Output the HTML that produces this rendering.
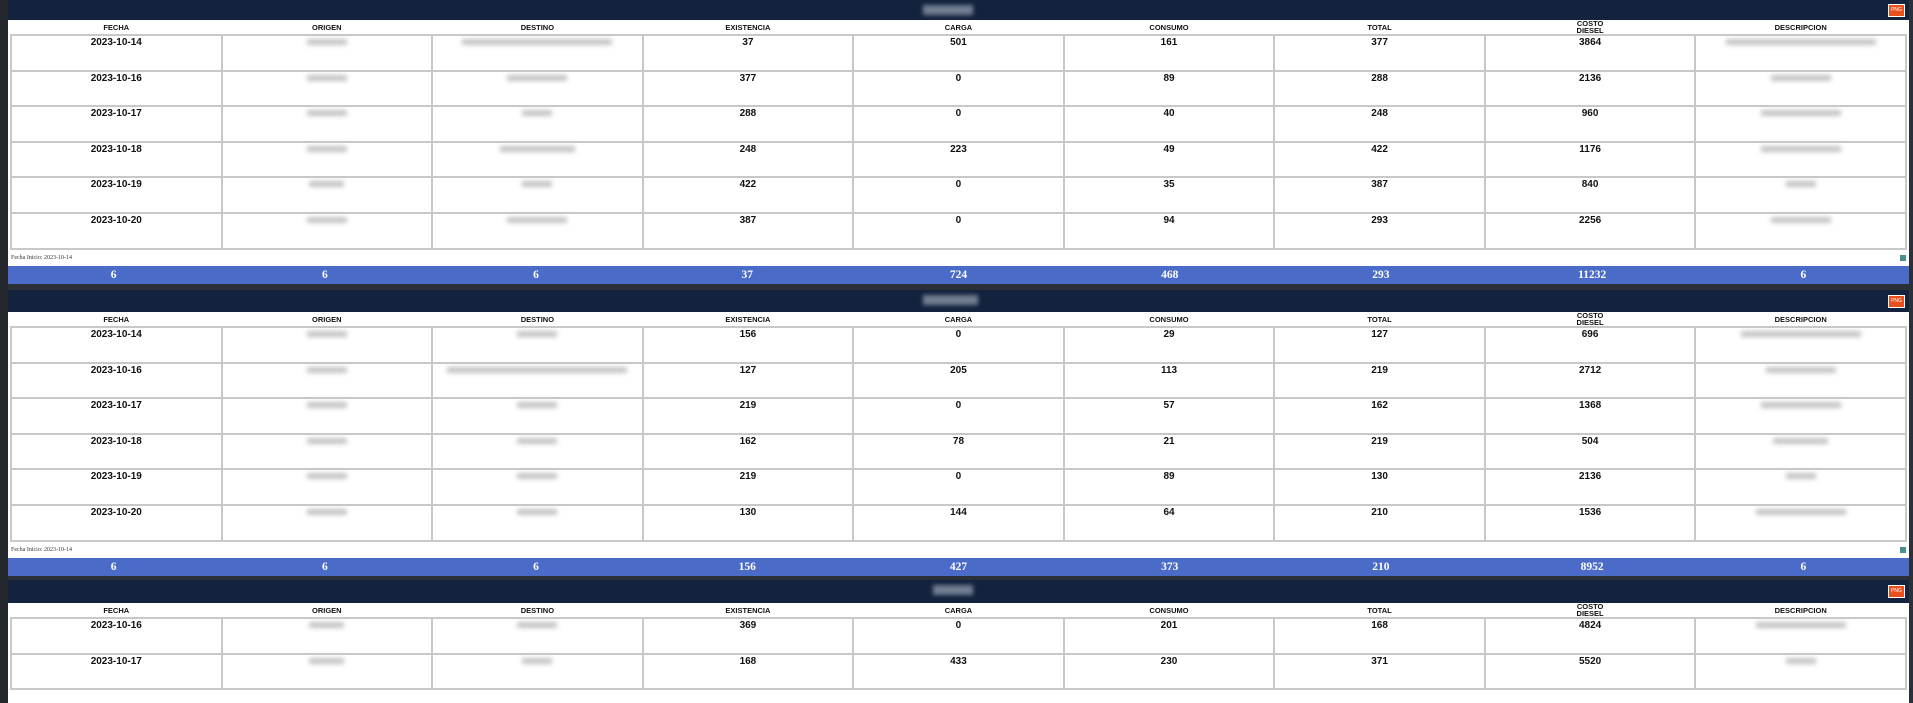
<!DOCTYPE html>
<html><head><meta charset="utf-8"><style>
*{margin:0;padding:0;box-sizing:border-box}
body{width:1913px;height:703px;overflow:hidden;background:#2b3038;font-family:"Liberation Sans",Arial,sans-serif;position:relative}
.strip{position:absolute;left:0;top:0;width:8px;height:703px;background:#24282e}
.panel{position:absolute;left:8px;width:1901px;background:#fff}
.hd{height:20px;background:#13223d;position:relative}
.png{position:absolute;right:4px;top:4px;width:17px;height:13px;background:#e8501e;border:1px solid #fff;color:#fff;font-size:5px;text-align:center;line-height:11px}
.ttl{position:absolute;left:915px;top:5px;width:50px;height:10px;background:#8a94a6;filter:blur(2px);opacity:.8}
table{border-collapse:collapse;table-layout:fixed;width:1897px;margin-left:2px}
th{font-size:7.5px;font-weight:bold;height:13px;line-height:7px;color:#111;padding:0}
td{border:2px solid #c8c8c8;height:35.6px;vertical-align:top;text-align:center;font-size:10px;font-weight:bold;padding-top:1px;color:#111;position:relative}
.bl{display:inline-block;height:6px;background:#c4c4c4;filter:blur(2.5px);margin-top:2px}
.fi{height:16px;font-family:"Liberation Serif",serif;font-size:6px;color:#333;padding:5px 0 0 3px;position:relative}
.plus{position:absolute;right:3px;top:5px;width:6px;height:6px;background:#4a8f8f}
.sum{height:18px;background:#4a6cc8;display:flex}
.sum div{flex:1;text-align:center;color:#fff;font-family:"Liberation Serif",serif;font-weight:bold;font-size:11.5px;line-height:18px}
</style></head><body>
<div class="strip"></div>

<div class="panel" style="top:0">
<div class="hd"><div class="ttl"></div><div class="png">PNG</div></div>
<table><tr><th>FECHA</th><th>ORIGEN</th><th>DESTINO</th><th>EXISTENCIA</th><th>CARGA</th><th>CONSUMO</th><th>TOTAL</th><th>COSTO<br>DIESEL</th><th>DESCRIPCION</th></tr>
<tr><td>2023-10-14</td><td><span class="bl" style="width:40px"></span></td><td><span class="bl" style="width:150px"></span></td><td>37</td><td>501</td><td>161</td><td>377</td><td>3864</td><td><span class="bl" style="width:150px"></span></td></tr>
<tr><td>2023-10-16</td><td><span class="bl" style="width:40px"></span></td><td><span class="bl" style="width:60px"></span></td><td>377</td><td>0</td><td>89</td><td>288</td><td>2136</td><td><span class="bl" style="width:60px"></span></td></tr>
<tr><td>2023-10-17</td><td><span class="bl" style="width:40px"></span></td><td><span class="bl" style="width:30px"></span></td><td>288</td><td>0</td><td>40</td><td>248</td><td>960</td><td><span class="bl" style="width:80px"></span></td></tr>
<tr><td>2023-10-18</td><td><span class="bl" style="width:40px"></span></td><td><span class="bl" style="width:75px"></span></td><td>248</td><td>223</td><td>49</td><td>422</td><td>1176</td><td><span class="bl" style="width:80px"></span></td></tr>
<tr><td>2023-10-19</td><td><span class="bl" style="width:35px"></span></td><td><span class="bl" style="width:30px"></span></td><td>422</td><td>0</td><td>35</td><td>387</td><td>840</td><td><span class="bl" style="width:30px"></span></td></tr>
<tr><td>2023-10-20</td><td><span class="bl" style="width:40px"></span></td><td><span class="bl" style="width:60px"></span></td><td>387</td><td>0</td><td>94</td><td>293</td><td>2256</td><td><span class="bl" style="width:60px"></span></td></tr>
</table>
<div class="fi">Fecha Inicio: 2023-10-14<div class="plus"></div></div>
<div class="sum"><div>6</div><div>6</div><div>6</div><div>37</div><div>724</div><div>468</div><div>293</div><div>11232</div><div>6</div></div>
</div>

<div class="panel" style="top:290px">
<div class="hd" style="height:22px"><div class="ttl" style="width:55px"></div><div class="png" style="top:5px">PNG</div></div>
<table><tr><th>FECHA</th><th>ORIGEN</th><th>DESTINO</th><th>EXISTENCIA</th><th>CARGA</th><th>CONSUMO</th><th>TOTAL</th><th>COSTO<br>DIESEL</th><th>DESCRIPCION</th></tr>
<tr><td>2023-10-14</td><td><span class="bl" style="width:40px"></span></td><td><span class="bl" style="width:40px"></span></td><td>156</td><td>0</td><td>29</td><td>127</td><td>696</td><td><span class="bl" style="width:120px"></span></td></tr>
<tr><td>2023-10-16</td><td><span class="bl" style="width:40px"></span></td><td><span class="bl" style="width:180px"></span></td><td>127</td><td>205</td><td>113</td><td>219</td><td>2712</td><td><span class="bl" style="width:70px"></span></td></tr>
<tr><td>2023-10-17</td><td><span class="bl" style="width:40px"></span></td><td><span class="bl" style="width:40px"></span></td><td>219</td><td>0</td><td>57</td><td>162</td><td>1368</td><td><span class="bl" style="width:80px"></span></td></tr>
<tr><td>2023-10-18</td><td><span class="bl" style="width:40px"></span></td><td><span class="bl" style="width:40px"></span></td><td>162</td><td>78</td><td>21</td><td>219</td><td>504</td><td><span class="bl" style="width:55px"></span></td></tr>
<tr><td>2023-10-19</td><td><span class="bl" style="width:40px"></span></td><td><span class="bl" style="width:40px"></span></td><td>219</td><td>0</td><td>89</td><td>130</td><td>2136</td><td><span class="bl" style="width:30px"></span></td></tr>
<tr><td>2023-10-20</td><td><span class="bl" style="width:40px"></span></td><td><span class="bl" style="width:40px"></span></td><td>130</td><td>144</td><td>64</td><td>210</td><td>1536</td><td><span class="bl" style="width:90px"></span></td></tr>
</table>
<div class="fi">Fecha Inicio: 2023-10-14<div class="plus"></div></div>
<div class="sum"><div>6</div><div>6</div><div>6</div><div>156</div><div>427</div><div>373</div><div>210</div><div>8952</div><div>6</div></div>
</div>

<div class="panel" style="top:580px;height:123px">
<div class="hd" style="height:23px"><div class="ttl" style="width:40px;left:925px"></div><div class="png" style="top:5px">PNG</div></div>
<table><tr><th>FECHA</th><th>ORIGEN</th><th>DESTINO</th><th>EXISTENCIA</th><th>CARGA</th><th>CONSUMO</th><th>TOTAL</th><th>COSTO<br>DIESEL</th><th>DESCRIPCION</th></tr>
<tr><td>2023-10-16</td><td><span class="bl" style="width:35px"></span></td><td><span class="bl" style="width:40px"></span></td><td>369</td><td>0</td><td>201</td><td>168</td><td>4824</td><td><span class="bl" style="width:90px"></span></td></tr>
<tr><td>2023-10-17</td><td><span class="bl" style="width:35px"></span></td><td><span class="bl" style="width:30px"></span></td><td>168</td><td>433</td><td>230</td><td>371</td><td>5520</td><td><span class="bl" style="width:30px"></span></td></tr>
</table>
</div>
</body></html>
